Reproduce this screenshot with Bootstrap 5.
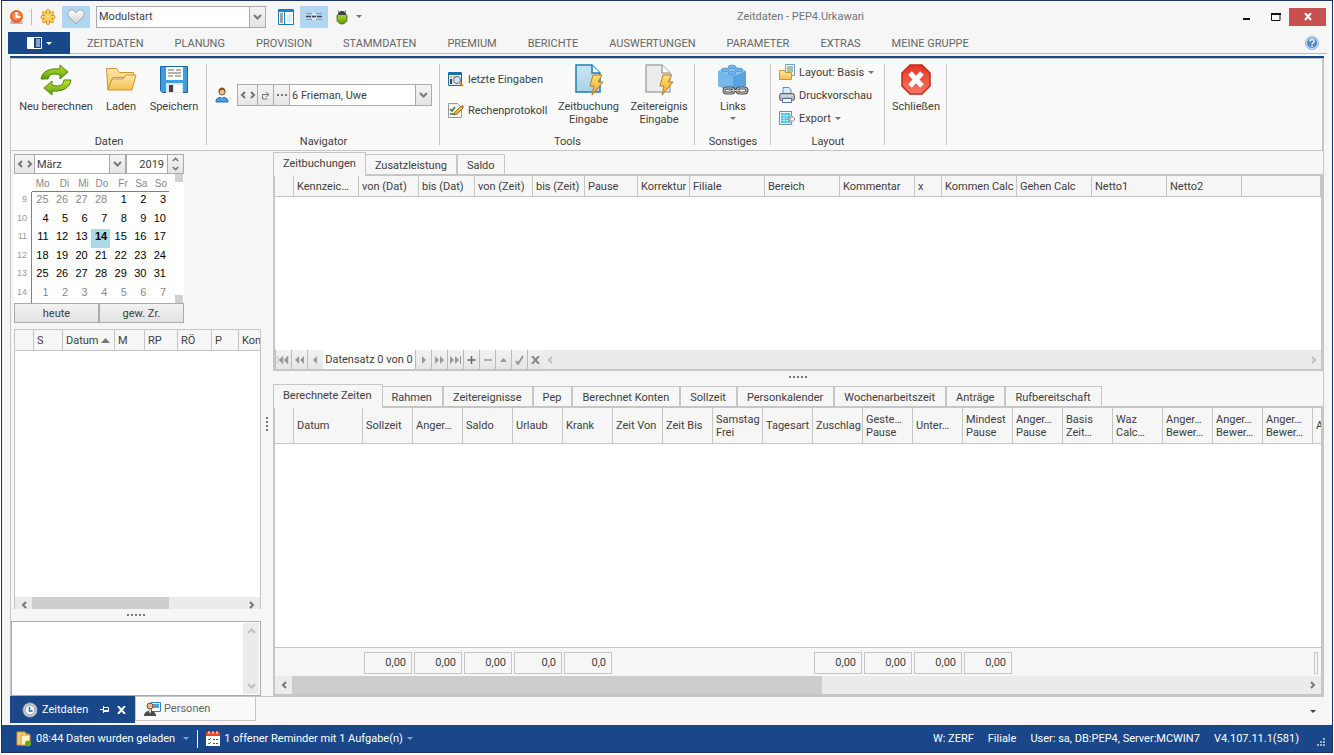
<!DOCTYPE html>
<html lang="de">
<head>
<meta charset="utf-8">
<meta name="viewport" content="width=device-width, initial-scale=1">
<title>Zeitdaten - PEP4.Urkawari</title>
<link href="https://cdn.jsdelivr.net/npm/bootstrap@5.3.0/dist/css/bootstrap.min.css" rel="stylesheet">
<style>
:root{--blue:#19478a;--line:#c6c6c6;--edge:#ababab;--face:#f6f6f6;--ink:#404040}
body{background:#fff;font:11px/13px Roboto,"Liberation Sans",sans-serif;color:var(--ink)}
button,select,input,textarea{font:inherit;color:inherit;border-radius:0}
svg{display:block;flex:none}
button{background:none;border:0;padding:0}
.app{height:100vh;min-height:560px;padding:0 1px 2px}
.win{border:1px solid #1a3464;background:var(--face);min-height:0}
.titlebar{height:31px;padding:0 6px 0 7px}
.qat>*{flex:none}
.toggle{width:28px;height:22px;background:#b0d6f1;margin:0 6px}
.vsep{width:1px;height:16px;background:#c0c0c0;margin:0 8px 0 7px}
.combo{position:relative;height:22px;border:1px solid var(--edge);background:#fff;flex:none}
.combo select{appearance:none;border:0;background:#fff;width:100%;height:100%;padding:0 18px 0 2px;outline:0}
.combo input{padding:0 19px 0 0;min-width:0}
.combo .chev{position:absolute;right:0;top:0;bottom:0;width:16px;border-left:1px solid var(--edge);background:linear-gradient(#f4f4f4,#e4e4e4);color:#777;pointer-events:none}
.closebtn{background:#c75050;width:37px;height:18px}
.menutabs{height:22px;padding:0 5px 0 6px}
.filebtn{width:62px;background:var(--blue);color:#fff}
.menutabs .rest{border-bottom:1px solid #bdbdbd}
.menutabs .links{gap:1px;padding-left:2px}
.menutabs .nav-link{color:#666;padding:0 15px;line-height:24px}
.ribbonwrap{margin:2px 8px 0}
.ribbon{border:1px solid var(--line);border-right-width:2px;background:#fafafa;height:93px}
.blueline{height:2px;background:var(--blue)}
.grp{position:relative;padding:5px 0 2px}
.grp::after{content:"";position:absolute;right:0;top:5px;bottom:5px;width:1px;background:var(--line)}
.grp .cap{line-height:12px;text-align:center}
.w-daten{width:196px}.w-navi{width:233px}.w-tools{width:255px}.w-sonst{width:76px}.w-lay{width:114px}.w-close{width:62px}
.bigbtn{display:flex;flex-direction:column;align-items:center;line-height:13px;white-space:nowrap}
.bigbtn svg{margin-bottom:4px}
.smallbtn{display:flex;align-items:center;gap:4px;white-space:nowrap}
.caret{width:0;height:0;border:3px solid transparent;border-top-color:currentColor;border-bottom:0;display:inline-block;flex:none}
.navbtn{width:16px;border:1px solid var(--edge);border-right:0;background:linear-gradient(#f4f4f4,#e6e6e6);color:#777;flex:none}
.navbtn.pair{width:20px}
.workarea{margin:0 8px;border-left:1px solid var(--line);border-right:1px solid var(--line);min-height:0}
.side{width:250px;min-height:0;flex:none}
.inset{margin-left:3px}
.calw{width:170px}
.calhead{height:20px;margin-top:3px}
.cal{height:129px;background:#fff;padding-right:1px}
.cal table{font:11px/14px "Liberation Sans",Arial,sans-serif;width:155px;height:129px;table-layout:fixed;color:#000;border-collapse:separate;border-spacing:0}
.cal th,.cal td{padding:0 3px 0 0;text-align:right;font-weight:400;vertical-align:top}
.cal thead th{height:18px;font-size:10px;color:#888;border-bottom:1px solid #808080;padding-right:2px;vertical-align:bottom}
.cal thead th:first-child{border-bottom:0}
.cal tbody th{font-size:9px;color:#999;border-right:1px solid #808080;padding-right:4px}
.cal .off{color:#888}
.cal .today{background:#add8e6;font-weight:700}
.sq{width:8px;height:8px;background:#d0d0d0}
.facebtn{border:1px solid var(--edge);background:linear-gradient(#f2f2f2,#e2e2e2);height:20px}
.databox{background:#fff;min-height:0;overflow:hidden}
.daylist{border:1px solid var(--line);border-bottom:0;margin-top:6px}
.gridtab{width:100%;table-layout:fixed;border-collapse:separate;border-spacing:0}
.gridtab thead th{background:var(--face);border-right:1px solid var(--line);border-bottom:1px solid var(--line);font-weight:400;padding:0 0 0 3px;height:21px;overflow:hidden;white-space:nowrap;vertical-align:middle}
.tall thead th{height:36px}
.gridtab tfoot td{background:var(--face);border-top:1px solid var(--line);height:29px;padding:3px 1px 2px}
.gridtab tfoot span{display:block;border:1px solid var(--line);height:22px;line-height:20px;text-align:right;padding-right:5px;overflow:hidden}
.gridtab tfoot .cut span{padding-right:0}
.gridtab tfoot .cut{padding-right:3px}
.frame{border:2px solid var(--line);min-height:0}
.bookings{height:197px}
.pages{padding-top:2px;height:23px}
.pages button{border:1px solid var(--line);border-bottom:0;margin-top:1px;height:21px;padding:0 9px;white-space:nowrap}
.pages.wide button{padding-right:10px}
.pages button+button{border-left:0;border-right-width:2px}
.pages button:last-child{border-right-width:1px}
.pages .on{margin-top:-1px;height:24px;z-index:1;background:var(--face);padding-bottom:2px;position:relative}
.recnav{height:19px;background:#ebebeb}
.recnav button{width:16px;border-left:1px solid #bbb;background:linear-gradient(#f2f2f2,#e6e6e6);color:#999}
.recnav output{width:92px;background:#fff;text-align:center;line-height:19px}
.sbar{height:18px;background:#ebebeb;color:#777}
.sbar .arr{width:17px}
.sbar .thumb{background:#cdcdcd}
.sbar.low{height:12px}
.pale{color:#c0c0c0}
.flip{transform:scaleY(-1)}
.dots{display:flex;gap:2px;justify-content:center;align-items:center;height:12px}
.dots i{width:2px;height:2px;background:#777}
.navbtn.dots{height:auto}
.dots.vert{flex-direction:column;width:12px;height:auto;flex:none}
.memo{height:75px;border:1px solid var(--edge);background:#fff}
.memo textarea{border:0;resize:none;outline:0;min-width:0;overflow:hidden}
.memo .vbar{width:16px;background:#ebebeb;color:#c0c0c0;margin:1px}
.docs{height:29px;margin:0 8px;border-top:1px solid var(--line)}
.docs .act{width:125px;height:27px;margin-top:-1px;background:var(--blue);color:#fff}
.docs .oth{width:121px;height:24px;border:1px solid var(--line);border-top:0;color:#666;background:#fafafa}
.status{height:27px;background:var(--blue);color:#fff;padding:0 6px 0 14px}
.status .cut-line{width:1px;height:18px;background:#fff}
.status .info{gap:14px}
</style>
</head>
<body>
<svg width="0" height="0" class="position-absolute" aria-hidden="true">
<defs>
<linearGradient id="gGreen" x2="0" y2="1"><stop stop-color="#c3e23a"/><stop offset="1" stop-color="#5c9e06"/></linearGradient>
<linearGradient id="gYel" x2="0" y2="1"><stop stop-color="#ffe9ae"/><stop offset="1" stop-color="#f5c04c"/></linearGradient>
<linearGradient id="gRed" x2="0" y2="1"><stop stop-color="#e2341f"/><stop offset="1" stop-color="#fb7a64"/></linearGradient>
<linearGradient id="gBlu" x2="0" y2="1"><stop stop-color="#cde6f2"/><stop offset="1" stop-color="#a9d2e6"/></linearGradient>
<linearGradient id="gGry" x2="0" y2="1"><stop stop-color="#fff"/><stop offset="1" stop-color="#cfcfcf"/></linearGradient>
<linearGradient id="gBolt" x2="0" y2="1"><stop stop-color="#ffe27a"/><stop offset="1" stop-color="#f5a623"/></linearGradient>
<symbol id="down" viewBox="0 0 9 6"><path d="M1 1l3.500 3.500L8 1" fill="none" stroke="currentColor" stroke-width="2"/></symbol>
<symbol id="left" viewBox="0 0 6 8"><path d="M5 1L2 4l3 3" fill="none" stroke="currentColor" stroke-width="2"/></symbol>
<symbol id="right" viewBox="0 0 6 8"><path d="M1 1l3 3-3 3" fill="none" stroke="currentColor" stroke-width="2"/></symbol>
<symbol id="page" viewBox="0 0 32 32"><path d="M3 1h16l8 8v19H3z"/><path d="M19 1v8h8" fill="#fff"/><path d="M20 11h9l-4 7h5L19 31l2-9h-4z" fill="url(#gBolt)" stroke="#c07a20" stroke-width="1"/></symbol>
</defs>
</svg>

<div class="app d-flex flex-column">
<div class="win d-flex flex-column flex-grow-1">

<header class="titlebar d-flex align-items-center">
  <div class="qat d-flex align-items-center">
    <svg width="15" height="16" viewBox="0 0 15 16"><rect x="1" y="12" width="13" height="3" rx="1" fill="#b9b9b9"/><circle cx="7.500" cy="7.500" r="6" fill="#ee6a25" stroke="#e0611f"/><circle cx="7.500" cy="7" r="4" fill="#f7935a"/><path d="M7.500 3v5h4" fill="none" stroke="#fff" stroke-width="2"/></svg>
    <span class="vsep"></span>
    <button aria-label="Neu"><svg width="16" height="16" viewBox="0 0 16 16"><g stroke="#e39a1c" stroke-width="4" stroke-linecap="round"><path d="M8 2v12M2.500 8h11M4 4l8 8M12 4l-8 8"/></g><g stroke="#ffd36b" stroke-width="2" stroke-linecap="round"><path d="M8 2v12M2.500 8h11M4 4l8 8M12 4l-8 8"/></g></svg></button>
    <button class="toggle d-flex align-items-center justify-content-center" aria-label="Favorit"><svg width="18" height="16" viewBox="0 0 18 16"><path d="M9 15L2 8C-1 4 3-.5 7 1.500L9 4l2-2.500C15-.5 19 4 16 8z" fill="url(#gGry)" stroke="#a5a5a5"/></svg></button>
    <label class="combo calw"><select aria-label="Modul"><option>Modulstart</option></select><span class="chev d-flex align-items-center justify-content-center"><svg width="9" height="6"><use href="#down"/></svg></span></label>
    <button class="ms-2 ps-1" aria-label="Navigation"><svg width="16" height="16" viewBox="0 0 16 16"><path d="M.5.500h15v15H.5z" fill="#fff" stroke="#1c7ab5"/><path d="M1 1h14v2H1zM6 3h1v12H6z" fill="#2385c0"/><path d="M2 5h3M2 7h3M2 9h3M2 11h3M2 13h3" stroke="#444"/><path d="M9 5h5v9H9z" fill="#d9effa"/></svg></button>
    <button class="toggle me-2 d-flex align-items-center justify-content-center" aria-label="Leiste"><svg width="16" height="9" viewBox="0 0 16 9"><path d="M0 1.500h16M0 7.500h16" stroke="#8a9aa8"/><path d="M0 4.500h5M11 4.500h5M6 4.500h4" stroke="#445" stroke-width="1.500"/><path d="M6 1v2h4V1zM6 6v2h4V6z" fill="#dce9f2"/></svg></button>
    <button aria-label="Debug"><svg width="12" height="16" viewBox="0 0 12 16"><path d="M3 4L2 1M9 4l1-3M0 7h12M0 12h12" stroke="#999"/><ellipse cx="6" cy="9" rx="5" ry="6" fill="url(#gGreen)" stroke="#4d6d22"/><path d="M2 6a4 4 0 0 1 8 0z" fill="#444"/></svg></button>
    <span class="caret ms-2 text-secondary"></span>
  </div>
  <div class="flex-grow-1 text-center text-secondary">Zeitdaten - PEP4.Urkawari</div>
  <div class="d-flex align-items-center">
    <button aria-label="Minimieren" class="me-3 px-1"><svg width="8" height="8"><path d="M0 5h7v2H0z" fill="#111"/></svg></button>
    <button aria-label="Maximieren" class="me-2"><svg width="10" height="8"><path d="M.5 1h8.500v6.500H.5z" fill="none" stroke="#111"/><path d="M0 0h10v2H0z" fill="#111"/></svg></button>
    <button aria-label="Fenster schließen" class="closebtn d-flex justify-content-center align-items-center"><svg width="8" height="8"><path d="M1 0l6 7M7 0L1 7" stroke="#fff" stroke-width="2"/></svg></button>
  </div>
</header>

<nav class="menutabs d-flex" aria-label="Menü">
  <button class="filebtn d-flex align-items-center justify-content-center gap-1" aria-label="Datei"><svg width="15" height="12" viewBox="0 0 15 12"><path d="M.5.500h14v11H.5z" fill="#19478a" stroke="#fff"/><path d="M1 1h6v10H1z" fill="#fff"/><path d="M9 3h4M9 5h4M9 7h4M9 9h4" stroke="#fff"/></svg><span class="caret"></span></button>
  <div class="rest d-flex flex-grow-1 justify-content-between">
    <div class="links d-flex">
      <a class="nav-link" href="#">ZEITDATEN</a><a class="nav-link" href="#">PLANUNG</a><a class="nav-link" href="#">PROVISION</a><a class="nav-link" href="#">STAMMDATEN</a><a class="nav-link" href="#">PREMIUM</a><a class="nav-link" href="#">BERICHTE</a><a class="nav-link" href="#">AUSWERTUNGEN</a><a class="nav-link" href="#">PARAMETER</a><a class="nav-link" href="#">EXTRAS</a><a class="nav-link" href="#">MEINE GRUPPE</a>
    </div>
    <button class="me-2" aria-label="Hilfe"><svg width="14" height="14" viewBox="0 0 14 14"><circle cx="7" cy="7" r="6.500" fill="#cfe0f4" stroke="#8fb0d8"/><circle cx="7" cy="7" r="5" fill="#4f88c8"/><path d="M5 5.500c0-3 4-2.500 4 0 0 1.500-2 1.500-2 3M7 9.500v1.500" fill="none" stroke="#fff" stroke-width="1.500"/></svg></button>
  </div>
</nav>

<div class="ribbonwrap">
<div class="blueline"></div>
<div class="ribbon d-flex">
  <section class="grp w-daten d-flex flex-column justify-content-between">
    <div class="d-flex">
      <button class="bigbtn" style="width:90px"><svg width="32" height="32" viewBox="0 0 32 32"><g fill="url(#gGreen)" stroke="#4a8a08"><path d="M1 15C2 7 10 4 20 5V1l8 7-8 7v-4C13 9 9 10 8 15z"/><path d="M31 16c-1 8-9 12-19 11v4l-8-7 8-7v4c7 2 11 1 12-5z"/></g></svg>Neu berechnen</button>
      <button class="bigbtn" style="width:40px"><svg width="32" height="32" viewBox="0 0 32 32"><path d="M1.500 4.500h10l3 4h14v5H8L3 26z" fill="url(#gYel)" stroke="#cf9433"/><path d="M7 15h11l3-4h10l-4 15H3z" fill="url(#gYel)" stroke="#cf9433"/></svg>Laden</button>
      <button class="bigbtn" style="width:66px"><svg width="32" height="32" viewBox="0 0 32 32"><path d="M2.500 2.500h27v26h-25l-2-2z" fill="#3d9fe0" stroke="#1568a6"/><path d="M8 3h17v13H8z" fill="#fff"/><path d="M10 6h6M18 6h5M10 9h13M10 12h5M17 12h6" stroke="#666"/><path d="M8 19h17v10H8z" fill="#dfe7ee"/><path d="M11 21h4v7h-4z" fill="#444"/><path d="M16 21h8v7h-8z" fill="#fff"/></svg>Speichern</button>
    </div>
    <div class="cap">Daten</div>
  </section>
  <section class="grp w-navi d-flex flex-column justify-content-between">
    <div class="d-flex align-items-center mt-3 pt-1 ps-2">
      <svg width="14" height="16" viewBox="0 0 14 16" class="me-2"><path d="M1 14c0-5 12-5 12 0v1H1z" fill="#4e9be0" stroke="#2a6cae"/><path d="M5 9l2 2 2-2z" fill="#fff"/><circle cx="7" cy="5" r="3" fill="#f0bd8a" stroke="#8a5a2b"/><path d="M3.500 5c-.5-6 7.500-6 7 0L9 3H6z" fill="#8a5120"/></svg>
      <div class="d-flex" style="height:22px">
        <button class="navbtn pair d-flex align-items-center justify-content-center gap-1" aria-label="Vor und zurück"><svg width="6" height="8"><use href="#left"/></svg><svg width="6" height="8"><use href="#right"/></svg></button>
        <button class="navbtn d-flex align-items-center justify-content-center" aria-label="Gehe zu"><svg width="9" height="9"><path d="M1.500 3v5h5M1 3.500h6M5 1l3 2.500L5 6" fill="none" stroke="currentColor"/></svg></button>
        <button class="navbtn dots" aria-label="Mehr"><i></i><i></i><i></i></button>
        <label class="combo" style="width:143px"><select aria-label="Person"><option>6 Frieman, Uwe</option></select><span class="chev d-flex align-items-center justify-content-center"><svg width="9" height="6"><use href="#down"/></svg></span></label>
      </div>
    </div>
    <div class="cap">Navigator</div>
  </section>
  <section class="grp w-tools d-flex flex-column justify-content-between">
    <div class="d-flex">
      <div class="d-flex flex-column gap-3 pt-2 ps-2" style="width:112px">
        <button class="smallbtn"><svg width="16" height="15" viewBox="0 0 16 15"><path d="M.5.500h13v13H.5z" fill="#d9effa" stroke="#1c6ea6"/><path d="M1 1h12v2H1z" fill="#1c6ea6"/><path d="M2 4h2v2H2zM5 4h3v2H5z" fill="#e6b642"/><path d="M2 7h2v5H2z" fill="#444"/><circle cx="9" cy="8" r="3.500" fill="#cfe7f6" stroke="#668"/><path d="M12 11l3 3" stroke="#c98a2c" stroke-width="2"/></svg>letzte Eingaben</button>
        <button class="smallbtn"><svg width="16" height="15" viewBox="0 0 16 15"><path d="M.5.500h9l4 4v10H.5z" fill="#f6f6f6" stroke="#999"/><path d="M2 6l2 2 3-4M2 11h4" fill="none" stroke="#3c7a1c" stroke-width="1.500"/><path d="M6 12l1-3 6-6 2 2-6 6z" fill="#f1b53c" stroke="#9c6a1a"/><path d="M13 3l2-1 1 2-1 1z" fill="#d8607a"/></svg>Rechenprotokoll</button>
      </div>
      <button class="bigbtn" style="width:73px"><svg width="32" height="32" fill="url(#gBlu)" stroke="#1d7fb0" stroke-width="1.500"><use href="#page"/></svg>Zeitbuchung<br>Eingabe</button>
      <button class="bigbtn" style="width:68px"><svg width="32" height="32" fill="#ececec" stroke="#a8a8a8" stroke-width="1.500"><use href="#page"/></svg>Zeitereignis<br>Eingabe</button>
    </div>
    <div class="cap">Tools</div>
  </section>
  <section class="grp w-sonst d-flex flex-column justify-content-between">
    <button class="bigbtn"><svg width="32" height="32" viewBox="0 0 32 32"><path d="M1 7l15-5 13 5v15l-13 6L1 22z" fill="#5ba3e0"/><path d="M1 7l15 5v16L1 22z" fill="#74b8ee"/><path d="M1 7l15-5 13 5-13 5z" fill="#9bd0f7"/><g fill="#6fb2ea" stroke="#4a90cf" stroke-width=".7"><ellipse cx="15" cy="3" rx="4" ry="2"/><ellipse cx="8" cy="6" rx="4" ry="2"/><ellipse cx="22" cy="6" rx="4" ry="2"/><ellipse cx="15" cy="9" rx="4" ry="2"/></g><g fill="none" stroke="#555" stroke-width="3"><rect x="7" y="24" width="10" height="5" rx="2.500"/><rect x="20" y="24" width="10" height="5" rx="2.500"/><path d="M14 26.500h9"/></g><g fill="none" stroke="#ccc"><rect x="7" y="24" width="10" height="5" rx="2.500"/><rect x="20" y="24" width="10" height="5" rx="2.500"/><path d="M14 26.500h9"/></g></svg>Links<span class="caret mt-1 text-secondary"></span></button>
    <div class="cap">Sonstiges</div>
  </section>
  <section class="grp w-lay d-flex flex-column justify-content-between">
    <div class="d-flex flex-column ps-2" style="gap:7px">
      <button class="smallbtn"><svg width="16" height="16" viewBox="0 0 16 16"><path d="M6.500.500h9v11h-9z" fill="#eef5fb" stroke="#6d9fd0"/><path d="M8 3h6M8 5h6M8 7h6" stroke="#5a8f50"/><path d="M.5 6.500h5l1 2h6v7H.5z" fill="url(#gYel)" stroke="#cf9a2a"/></svg>Layout: Basis<span class="caret text-secondary"></span></button>
      <button class="smallbtn"><svg width="16" height="16" viewBox="0 0 16 16"><path d="M4 7V.500h6l2 2V7z" fill="#d5e9fb" stroke="#5b93cf"/><rect x=".5" y="6.500" width="15" height="7" rx="2" fill="#b5b9bf" stroke="#5e6269"/><path d="M2 9h12" stroke="#eee"/><path d="M3.500 11.500h9v4h-9z" fill="#fff" stroke="#4b78a8"/></svg>Druckvorschau</button>
      <button class="smallbtn"><svg width="16" height="16" viewBox="0 0 16 16"><path d="M.5 1.500h12v13H.5z" fill="#fff" stroke="#6f8f96"/><path d="M2 3h9v10H2z" fill="#37bff0"/><path d="M2 5.500h9M2 8h9M2 10.500h9M5 3v10M8 3v10" stroke="#c4f0ff" stroke-width=".7"/><path d="M9 8h3V5l4 4-4 4v-3H9z" fill="#f4f4f4" stroke="#7e8c8c"/></svg>Export<span class="caret text-secondary"></span></button>
    </div>
    <div class="cap">Layout</div>
  </section>
  <section class="grp w-close">
    <button class="bigbtn w-100"><svg width="32" height="32" viewBox="0 0 32 32"><path d="M10 1h12l8 8v13l-8 8H10l-8-8V9z" fill="url(#gRed)" stroke="#c22a1c" stroke-width="1.500"/><path d="M10 9l12 13M22 9L10 22" stroke="#fff" stroke-width="5"/></svg>Schließen</button>
  </section>
</div>
</div>

<main class="workarea d-flex flex-grow-1">
  <aside class="side d-flex flex-column">
    <div class="inset d-flex calhead calw">
      <button class="navbtn pair d-flex align-items-center justify-content-center gap-1" aria-label="Monat wechseln"><svg width="6" height="8"><use href="#left"/></svg><svg width="6" height="8"><use href="#right"/></svg></button>
      <label class="combo h-100" style="width:92px"><select aria-label="Monat"><option>März</option></select><span class="chev d-flex align-items-center justify-content-center"><svg width="9" height="6"><use href="#down"/></svg></span></label>
      <label class="combo h-100" style="width:58px"><input class="border-0 w-100 h-100 text-end" value="2019" aria-label="Jahr"><span class="chev d-flex flex-column align-items-center justify-content-center gap-1"><svg class="flip" width="7" height="5"><use href="#down"/></svg><svg width="7" height="5"><use href="#down"/></svg></span></label>
    </div>
    <div class="inset cal calw d-flex justify-content-between">
      <table>
        <colgroup><col style="width:18px"><col><col><col><col><col><col><col></colgroup>
        <thead><tr><th></th><th>Mo</th><th>Di</th><th>Mi</th><th>Do</th><th>Fr</th><th>Sa</th><th>So</th></tr></thead>
        <tbody>
        <tr><th>9</th><td class="off">25</td><td class="off">26</td><td class="off">27</td><td class="off">28</td><td>1</td><td>2</td><td>3</td></tr>
        <tr><th>10</th><td>4</td><td>5</td><td>6</td><td>7</td><td>8</td><td>9</td><td>10</td></tr>
        <tr><th>11</th><td>11</td><td>12</td><td>13</td><td class="today">14</td><td>15</td><td>16</td><td>17</td></tr>
        <tr><th>12</th><td>18</td><td>19</td><td>20</td><td>21</td><td>22</td><td>23</td><td>24</td></tr>
        <tr><th>13</th><td>25</td><td>26</td><td>27</td><td>28</td><td>29</td><td>30</td><td>31</td></tr>
        <tr><th>14</th><td class="off">1</td><td class="off">2</td><td class="off">3</td><td class="off">4</td><td class="off">5</td><td class="off">6</td><td class="off">7</td></tr>
        </tbody>
      </table>
      <div class="d-flex flex-column justify-content-between"><span class="sq"></span><span class="sq"></span></div>
    </div>
    <div class="inset calw d-flex"><button class="facebtn w-50">heute</button><button class="facebtn w-50">gew. Zr.</button></div>
    <div class="inset databox daylist flex-grow-1 d-flex flex-column">
      <table class="gridtab">
        <colgroup><col style="width:19px"><col style="width:29px"><col style="width:52px"><col style="width:30px"><col style="width:33px"><col style="width:34px"><col style="width:27px"><col></colgroup>
        <thead><tr><th></th><th>S</th><th>Datum <svg class="d-inline-block" width="9" height="5"><path d="M0 5l4.500-5L9 5z" fill="#777"/></svg></th><th>M</th><th>RP</th><th>RÖ</th><th>P</th><th class="border-end-0">Kom</th></tr></thead>
      </table>
      <div class="flex-grow-1"></div>
      <div class="sbar low d-flex overflow-hidden">
        <span class="arr d-flex align-items-end justify-content-center"><svg width="6" height="8"><use href="#left"/></svg></span>
        <span class="flex-grow-1 d-flex"><span class="thumb" style="width:65%"></span></span>
        <span class="arr d-flex align-items-end justify-content-center"><svg width="6" height="8"><use href="#right"/></svg></span>
      </div>
    </div>
    <div class="dots"><i></i><i></i><i></i><i></i><i></i></div>
    <div class="memo d-flex"><textarea class="flex-grow-1" aria-label="Notiz"></textarea><div class="vbar d-flex flex-column justify-content-between align-items-center py-1"><svg class="flip" width="9" height="8"><use href="#down"/></svg><svg width="9" height="8"><use href="#down"/></svg></div></div>
  </aside>

  <div class="dots vert"><i></i><i></i><i></i><i></i></div>

  <div class="flex-grow-1 d-flex flex-column" style="min-width:0">
    <div class="pages d-flex" role="tablist"><button class="on" role="tab">Zeitbuchungen</button><button role="tab">Zusatzleistung</button><button role="tab">Saldo</button></div>
    <div class="frame bookings databox d-flex flex-column">
      <table class="gridtab">
        <colgroup><col style="width:19px"><col style="width:65px"><col style="width:60px"><col style="width:56px"><col style="width:58px"><col style="width:52px"><col style="width:53px"><col style="width:52px"><col style="width:75px"><col style="width:75px"><col style="width:75px"><col style="width:27px"><col style="width:75px"><col style="width:75px"><col style="width:75px"><col style="width:75px"><col></colgroup>
        <thead><tr><th></th><th>Kennzeic…</th><th>von (Dat)</th><th>bis (Dat)</th><th>von (Zeit)</th><th>bis (Zeit)</th><th>Pause</th><th>Korrektur</th><th>Filiale</th><th>Bereich</th><th>Kommentar</th><th>x</th><th>Kommen Calc</th><th>Gehen Calc</th><th>Netto1</th><th>Netto2</th><th></th></tr></thead>
      </table>
      <div class="flex-grow-1"></div>
      <div class="recnav d-flex align-items-stretch">
        <button aria-label="Erster"><svg width="15" height="8"><path d="M2 0v8M7 0v8L3 4zM12 0v8L8 4z" fill="currentColor" stroke="currentColor" stroke-width=".5"/></svg></button>
        <button aria-label="Seite zurück"><svg width="15" height="8"><path d="M7 0v8L3 4zM12 0v8L8 4z" fill="currentColor"/></svg></button>
        <button aria-label="Zurück"><svg width="15" height="8"><path d="M9 0v8L5 4z" fill="currentColor"/></svg></button>
        <output>Datensatz 0 von 0</output>
        <button aria-label="Weiter"><svg width="15" height="8"><path d="M6 0v8l4-4z" fill="currentColor"/></svg></button>
        <button aria-label="Seite vor"><svg width="15" height="8"><path d="M3 0v8l4-4zM8 0v8l4-4z" fill="currentColor"/></svg></button>
        <button aria-label="Letzter"><svg width="15" height="8"><path d="M2 0v8l4-4zM7 0v8l4-4zM12 0h1v8h-1z" fill="currentColor"/></svg></button>
        <button aria-label="Neu"><svg width="15" height="8"><path d="M7.500 0v8M3.500 4h8" stroke="#666" stroke-width="1.500"/></svg></button>
        <button aria-label="Löschen"><svg width="15" height="8"><path d="M4 4h8" stroke="currentColor" stroke-width="1.500"/></svg></button>
        <button aria-label="Bearbeiten"><svg width="15" height="8"><path d="M4 6l3.500-4L11 6z" fill="currentColor"/></svg></button>
        <button aria-label="Übernehmen"><svg width="15" height="10"><path d="M4 6l2 3 5-8" fill="none" stroke="currentColor" stroke-width="2"/></svg></button>
        <button aria-label="Verwerfen"><svg width="15" height="8"><path d="M4 0l7 8M11 0L4 8" stroke="#888" stroke-width="2"/></svg></button>
        <span class="pale d-flex align-items-center flex-grow-1 justify-content-between ps-1 pe-1"><svg width="6" height="8"><use href="#left"/></svg><svg width="6" height="8"><use href="#right"/></svg></span>
      </div>
    </div>
    <div class="dots"><i></i><i></i><i></i><i></i><i></i></div>
    <div class="pages wide d-flex" role="tablist"><button class="on" role="tab">Berechnete Zeiten</button><button role="tab">Rahmen</button><button role="tab">Zeitereignisse</button><button role="tab">Pep</button><button role="tab">Berechnet Konten</button><button role="tab">Sollzeit</button><button role="tab">Personkalender</button><button role="tab">Wochenarbeitszeit</button><button role="tab">Anträge</button><button role="tab">Rufbereitschaft</button></div>
    <div class="frame databox d-flex flex-column flex-grow-1">
      <div class="flex-grow-1 databox">
      <table class="gridtab tall h-100">
        <colgroup><col style="width:19px"><col style="width:69px"><col span="19" style="width:50px"><col></colgroup>
        <thead><tr><th></th><th>Datum</th><th>Sollzeit</th><th>Anger…</th><th>Saldo</th><th>Urlaub</th><th>Krank</th><th>Zeit Von</th><th>Zeit Bis</th><th>Samstag<br>Frei</th><th>Tagesart</th><th>Zuschlag</th><th>Geste…<br>Pause</th><th>Unter…</th><th>Mindest<br>Pause</th><th>Anger…<br>Pause</th><th>Basis<br>Zeit…</th><th>Waz<br>Calc…</th><th>Anger…<br>Bewer…</th><th>Anger…<br>Bewer…</th><th>Anger…<br>Bewer…</th><th class="border-end-0">A</th></tr></thead>
        <tbody><tr><td colspan="22"></td></tr></tbody>
        <tfoot><tr><td></td><td></td><td><span>0,00</span></td><td><span>0,00</span></td><td><span>0,00</span></td><td><span>0,0</span></td><td><span>0,0</span></td><td></td><td></td><td></td><td></td><td><span>0,00</span></td><td><span>0,00</span></td><td><span>0,00</span></td><td><span>0,00</span></td><td></td><td></td><td></td><td></td><td></td><td></td><td class="cut"><span></span></td></tr></tfoot>
      </table>
      </div>
      <div class="sbar d-flex">
        <span class="arr d-flex align-items-center justify-content-center"><svg width="6" height="8"><use href="#left"/></svg></span>
        <span class="flex-grow-1 d-flex"><span class="thumb" style="width:52.4%"></span></span>
        <span class="arr d-flex align-items-center justify-content-center"><svg width="6" height="8"><use href="#right"/></svg></span>
      </div>
    </div>
  </div>
</main>

<div class="docs d-flex justify-content-between">
  <div class="d-flex">
    <div class="act d-flex align-items-center ps-2">
      <svg width="16" height="16" viewBox="0 0 16 16" class="ms-1 me-1"><circle cx="8" cy="8" r="7" fill="#d8d8d8" stroke="#a8a8a8"/><circle cx="8" cy="8" r="5" fill="#f3f6fa" stroke="#8a94a0"/><path d="M7.500 5v4h3" fill="none" stroke="#2c6cb0" stroke-width="1.500"/></svg>
      <span class="flex-grow-1">Zeitdaten</span>
      <button class="me-2" aria-label="Anheften"><svg width="9" height="7"><path d="M0 3.500h3M3.500 0v7M3.500 1.500h5v4h-5" fill="none" stroke="#fff"/><path d="M4 4h4v2H4z" fill="#fff"/></svg></button>
      <button class="me-2" aria-label="Tab schließen"><svg width="10" height="8"><path d="M1 0l7 8M8 0L1 8" stroke="#fff" stroke-width="2"/></svg></button>
    </div>
    <a class="oth d-flex align-items-center text-decoration-none ps-2" href="#"><svg width="18" height="16" viewBox="0 0 18 16"><path d="M7.500 1.500h9v9h-9z" fill="#fff" stroke="#1b87c4"/><path d="M9 4h6M9 6h6" stroke="#1b87c4" stroke-width="1.500"/><circle cx="6" cy="5" r="3" fill="#e9b98c" stroke="#7a4a20"/><path d="M0 15c0-7 12-7 12 0z" fill="#4a4a4a"/><path d="M5 10l1 3 1-3z" fill="#fff"/></svg><span style="padding-left:2px">Personen</span></a>
  </div>
  <span class="caret align-self-center me-2"></span>
</div>

<footer class="status d-flex align-items-center">
  <svg width="16" height="16" viewBox="0 0 16 16"><path d="M1 1h8l1 2h3v11H1z" fill="#f2ce7a" stroke="#d09a35"/><path d="M5 4h9v10H5z" fill="#fff2cf" stroke="#d09a35"/><circle cx="12" cy="12.500" r="3" fill="#6aa91c"/></svg>
  <span class="ms-1">08:44 Daten wurden geladen</span><span class="caret ms-2 opacity-50"></span>
  <span class="cut-line mx-2"></span>
  <svg width="14" height="15" viewBox="0 0 14 15"><path d="M0 1h14v14H0z" fill="#fff"/><path d="M0 1h14v4H0z" fill="#e04a2c"/><path d="M3 0v3M7 0v3M11 0v3" stroke="#fff"/><path d="M2 8l1 1 2-2M2 12l1 1 2-2" fill="none" stroke="#3a8a2a"/><path d="M7 8.500h2M10 8.500h2M7 12.500h2M10 12.500h2" stroke="#555"/></svg>
  <span class="ms-1">1 offener Reminder mit 1 Aufgabe(n)</span><span class="caret ms-1 opacity-50"></span>
  <div class="info ms-auto d-flex align-items-center"><span>W: ZERF</span><span>Filiale</span><span>User: sa, DB:PEP4, Server:MCWIN7</span><span class="me-1">V4.107.11.1(581)</span>
  <svg width="9" height="9" fill="#9fb4d4" class="mt-2"><path d="M6 0h2v2H6zM3 3h2v2H3zM6 3h2v2H6zM0 6h2v2H0zM3 6h2v2H3zM6 6h2v2H6z"/></svg></div>
</footer>
</div>
</div>
<script src="https://cdn.jsdelivr.net/npm/bootstrap@5.3.0/dist/js/bootstrap.bundle.min.js"></script>
</body>
</html>
